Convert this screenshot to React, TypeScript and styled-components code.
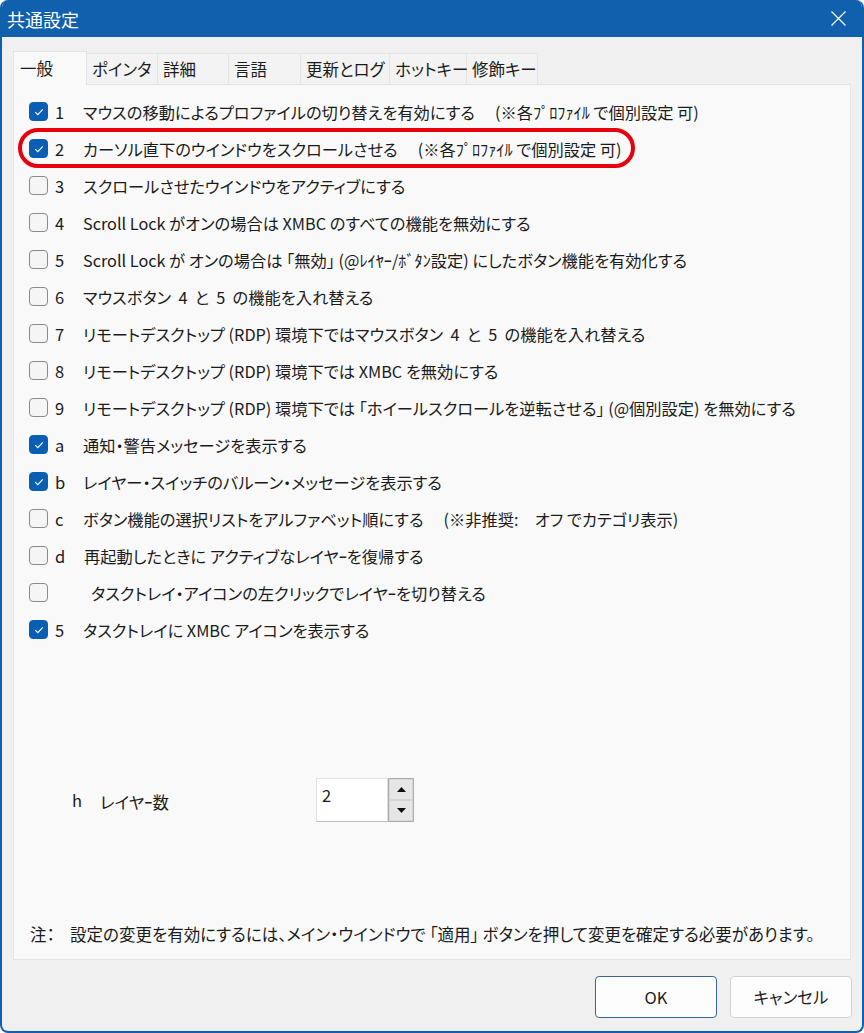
import styled, { createGlobalStyle } from 'styled-components';

const GlobalStyle = createGlobalStyle`
  html, body {
    margin: 0;
    padding: 0;
    background: #ffffff;
  }
  body {
    font-family: "Noto Sans CJK JP", "Noto Sans", sans-serif;
    font-feature-settings: "palt";
    color: #1b1b1b;
  }
`;

// ウインドウ全体
const Window = styled.div`
  width: 864px;
  height: 1033px;
  box-sizing: border-box;
  display: flex;
  flex-direction: column;
  background: #f0f0f0;
  border: 2px solid #1160ad;
  border-top: none;
  border-radius: 8px;
  overflow: hidden;
`;

// タイトルバー
const TitleBar = styled.div`
  height: 37px;
  flex-shrink: 0;
  background: #1160ad;
  color: #ffffff;
  display: flex;
  align-items: center;
  justify-content: space-between;
  padding: 0 16px 0 5px;
  font-size: 18px;
`;

const CloseIcon = styled.svg`
  width: 15px;
  height: 15px;
  display: block;
`;

// タブ + パネル部分
const Body = styled.div`
  padding: 14px 11px 0 11px;
  display: flex;
  flex-direction: column;
`;

const TabStrip = styled.div`
  display: flex;
  align-items: flex-end;
  height: 33px;
`;

const Tab = styled.div<{ $active?: boolean; $width: number }>`
  position: relative;
  z-index: ${(p) => (p.$active ? 1 : 0)};
  width: ${(p) => p.$width}px;
  height: ${(p) => (p.$active ? 34 : 31)}px;
  margin-bottom: ${(p) => (p.$active ? -1 : 0)}px;
  box-sizing: border-box;
  border: 1px solid #e3e3e3;
  border-bottom: none;
  border-left: none;
  background: ${(p) => (p.$active ? '#f9f9f9' : '#f3f3f3')};
  display: flex;
  align-items: center;
  padding: ${(p) => (p.$active ? '0 0 2px 6px' : '0 0 0 5px')};
  font-size: 16.5px;
  white-space: nowrap;
  &:first-child {
    border-left: 1px solid #e3e3e3;
  }
`;

const Panel = styled.div`
  height: 876px;
  box-sizing: border-box;
  border: 1px solid #e3e3e3;
  background: #f9f9f9;
  display: flex;
  flex-direction: column;
  padding: 8px 0 13px 0;
`;

// チェックボックス行
const Row = styled.div`
  height: 37px;
  display: flex;
  align-items: center;
  padding-left: 15px;
`;

const RowBody = styled.div<{ $highlight?: boolean }>`
  position: relative;
  height: 24px;
  display: flex;
  align-items: center;
  &::after {
    content: '';
    display: ${(p) => (p.$highlight ? 'block' : 'none')};
    position: absolute;
    left: -11px;
    right: -13px;
    top: -9px;
    bottom: -7px;
    border: 4px solid #e8000d;
    border-radius: 21px;
  }
`;

const Box = styled.span<{ $checked?: boolean }>`
  width: 19px;
  height: 19px;
  box-sizing: border-box;
  border-radius: 4px;
  border: 1px solid ${(p) => (p.$checked ? '#0a5fb4' : '#8a8a8a')};
  background: ${(p) => (p.$checked ? '#0a5fb4' : '#f5f5f5')};
  display: flex;
  align-items: center;
  justify-content: center;
  flex-shrink: 0;
`;

const KeyLabel = styled.span`
  width: 35px;
  padding-left: 7px;
  box-sizing: border-box;
  font-size: 16.5px;
`;

const LabelText = styled.span<{ $indent?: number }>`
  font-size: 16.25px;
  white-space: pre;
  padding-left: ${(p) => p.$indent ?? 0}px;
`;

const Note = styled.span`
  margin-left: 20px;
`;

// レイヤー数
const LayerRow = styled.div`
  margin-top: 130px;
  height: 44px;
  display: flex;
  align-items: center;
  padding-left: 58px;
  font-size: 16.5px;
`;

const LayerKey = styled.span`
  width: 28px;
`;

const LayerText = styled.span`
  width: 216px;
  padding-top: 3px;
`;

const Spinner = styled.div`
  display: flex;
  height: 44px;
`;

const SpinInput = styled.div`
  width: 72px;
  box-sizing: border-box;
  background: #ffffff;
  border: 1px solid #e0e0e0;
  border-bottom-color: #bdbdbd;
  padding: 4px 0 0 5px;
  font-size: 16.5px;
`;

const SpinButtons = styled.div`
  width: 26px;
  box-sizing: border-box;
  border: 1px solid #adadad;
  display: flex;
  flex-direction: column;
`;

const SpinButton = styled.div`
  flex: 1;
  background: #e6e6e6;
  border: 1px solid #d6d6d6;
  display: flex;
  align-items: center;
  justify-content: center;
`;

const NoteLine = styled.div`
  margin-top: auto;
  padding-left: 16px;
  font-size: 16.5px;
  white-space: nowrap;
  display: flex;
`;

const NoteHead = styled.span`
  width: 40px;
`;

// ボタン
const Footer = styled.div`
  display: flex;
  justify-content: flex-end;
  gap: 13px;
  padding: 16px 10px 0 0;
`;

const DialogButton = styled.button<{ $primary?: boolean }>`
  width: 122px;
  height: 42px;
  border-radius: 4px;
  border: 1px solid ${(p) => (p.$primary ? '#37659a' : '#d3d3d3')};
  background: #fdfdfd;
  font-family: inherit;
  font-feature-settings: "palt";
  font-size: 16.5px;
  color: #1b1b1b;
`;

const tabs = [
  { label: '一般', width: 74, active: true },
  { label: 'ポインタ', width: 71 },
  { label: '詳細', width: 71 },
  { label: '言語', width: 72 },
  { label: '更新とログ', width: 89 },
  { label: 'ホットキー', width: 77 },
  { label: '修飾キー', width: 71 },
];

type Item = {
  key: string;
  checked?: boolean;
  text: string;
  note?: string;
  highlight?: boolean;
  indent?: number;
};

const items: Item[] = [
  { key: '1', checked: true, text: 'マウスの移動によるプロファイルの切り替えを有効にする', note: '(※各ﾌﾟﾛﾌｧｲﾙ で個別設定 可)' },
  { key: '2', checked: true, text: 'カーソル直下のウインドウをスクロールさせる', note: '(※各ﾌﾟﾛﾌｧｲﾙ で個別設定 可)', highlight: true },
  { key: '3', text: 'スクロールさせたウインドウをアクティブにする' },
  { key: '4', text: 'Scroll Lock がオンの場合は XMBC のすべての機能を無効にする' },
  { key: '5', text: 'Scroll Lock が オンの場合は 「無効」 (@ﾚｲﾔｰ/ﾎﾞﾀﾝ設定) にしたボタン機能を有効化する' },
  { key: '6', text: 'マウスボタン  4  と  5  の機能を入れ替える' },
  { key: '7', text: 'リモートデスクトップ (RDP) 環境下ではマウスボタン  4  と  5  の機能を入れ替える' },
  { key: '8', text: 'リモートデスクトップ (RDP) 環境下では XMBC を無効にする' },
  { key: '9', text: 'リモートデスクトップ (RDP) 環境下では 「ホイールスクロールを逆転させる」 (@個別設定) を無効にする' },
  { key: 'a', checked: true, text: '通知・警告メッセージを表示する' },
  { key: 'b', checked: true, text: 'レイヤー・スイッチのバルーン・メッセージを表示する' },
  { key: 'c', text: 'ボタン機能の選択リストをアルファベット順にする', note: '(※非推奨:　オフ でカテゴリ表示)' },
  { key: 'd', text: '再起動したときに アクティブなレイヤｰを復帰する', indent: 1 },
  { key: '', text: 'タスクトレイ・アイコンの左クリックでレイヤｰを切り替える', indent: 8 },
  { key: '5', checked: true, text: 'タスクトレイに XMBC アイコンを表示する' },
];

function CheckBox({ checked }: { checked?: boolean }) {
  return (
    <Box $checked={checked}>
      {checked && (
        <svg width="12" height="12" viewBox="0 0 12 12">
          <path d="M2.3 6.2 L4.8 8.6 L9.8 3.4" fill="none" stroke="#ffffff" strokeWidth="1.1" />
        </svg>
      )}
    </Box>
  );
}

export default function App() {
  return (
    <>
      <GlobalStyle />
      <Window>
        <TitleBar>
          <span>共通設定</span>
          <CloseIcon viewBox="0 0 15 15">
            <path d="M0.5 0.5 L14.5 14.5 M14.5 0.5 L0.5 14.5" stroke="#ffffff" strokeWidth="1.2" />
          </CloseIcon>
        </TitleBar>
        <Body>
          <TabStrip>
            {tabs.map((t) => (
              <Tab key={t.label} $active={t.active} $width={t.width}>
                {t.label}
              </Tab>
            ))}
          </TabStrip>
          <Panel>
            {items.map((item, i) => (
              <Row key={i}>
                <RowBody $highlight={item.highlight}>
                  <CheckBox checked={item.checked} />
                  <KeyLabel>{item.key}</KeyLabel>
                  <LabelText $indent={item.indent}>
                    {item.text}
                    {item.note && <Note>{item.note}</Note>}
                  </LabelText>
                </RowBody>
              </Row>
            ))}
            <LayerRow>
              <LayerKey>h</LayerKey>
              <LayerText>レイヤｰ数</LayerText>
              <Spinner>
                <SpinInput>2</SpinInput>
                <SpinButtons>
                  <SpinButton>
                    <svg width="9" height="5" viewBox="0 0 9 5">
                      <path d="M0 5 L4.5 0 L9 5 Z" fill="#111" />
                    </svg>
                  </SpinButton>
                  <SpinButton>
                    <svg width="9" height="5" viewBox="0 0 9 5">
                      <path d="M0 0 L9 0 L4.5 5 Z" fill="#111" />
                    </svg>
                  </SpinButton>
                </SpinButtons>
              </Spinner>
            </LayerRow>
            <NoteLine>
              <NoteHead>注：</NoteHead>
              <span>設定の変更を有効にするには、メイン・ウインドウで 「適用」 ボタンを押して変更を確定する必要があります。</span>
            </NoteLine>
          </Panel>
        </Body>
        <Footer>
          <DialogButton $primary>OK</DialogButton>
          <DialogButton>キャンセル</DialogButton>
        </Footer>
      </Window>
    </>
  );
}
